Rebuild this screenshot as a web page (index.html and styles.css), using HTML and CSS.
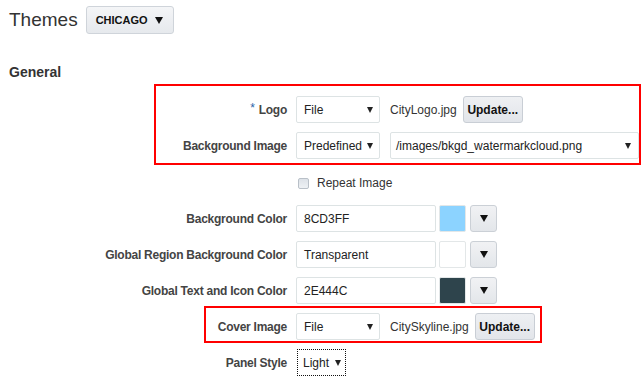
FILE: index.html
```html
<!DOCTYPE html>
<html lang="en">
<head>
    <meta charset="UTF-8">
    <title>Themes</title>
    <link rel="stylesheet" href="styles.css">
</head>
<body>
<div class="page">

    <div class="title-bar">
        <h1>Themes</h1>
        <button class="theme-btn">CHICAGO <span class="caret big"></span></button>
    </div>

    <h2 class="section">General</h2>

    <div class="form">
        <!-- Logo -->
        <div class="label"><span class="req">*</span>Logo</div>
        <div class="field">
            <div class="select w-84"><span>File</span><span class="caret"></span></div>
            <span class="file-name">CityLogo.jpg</span>
            <button class="btn">Update...</button>
        </div>

        <!-- Background image -->
        <div class="label">Background Image</div>
        <div class="field">
            <div class="select w-84"><span>Predefined</span><span class="caret"></span></div>
            <div class="select w-wide"><span>/images/bkgd_watermarkcloud.png</span><span class="caret"></span></div>
        </div>

        <div class="label"></div>
        <div class="field check-row">
            <span class="checkbox"></span>
            <span class="check-text">Repeat Image</span>
        </div>

        <!-- Renkler -->
        <div class="label">Background Color</div>
        <div class="field">
            <div class="input">8CD3FF</div>
            <span class="swatch" style="background-color: #8CD3FF;"></span>
            <button class="btn-drop"><span class="caret big"></span></button>
        </div>

        <div class="label">Global Region Background Color</div>
        <div class="field">
            <div class="input">Transparent</div>
            <span class="swatch" style="background-color: #ffffff;"></span>
            <button class="btn-drop"><span class="caret big"></span></button>
        </div>

        <div class="label">Global Text and Icon Color</div>
        <div class="field">
            <div class="input">2E444C</div>
            <span class="swatch" style="background-color: #2E444C;"></span>
            <button class="btn-drop"><span class="caret big"></span></button>
        </div>

        <!-- Cover image -->
        <div class="label">Cover Image</div>
        <div class="field">
            <div class="select w-84"><span>File</span><span class="caret"></span></div>
            <span class="file-name">CitySkyline.jpg</span>
            <button class="btn">Update...</button>
        </div>

        <div class="label">Panel Style</div>
        <div class="field">
            <div class="select panel"><span>Light</span><span class="caret"></span></div>
        </div>
    </div>

    <!-- kırmızı işaret kutuları -->
    <div class="mark mark-top"></div>
    <div class="mark mark-cover"></div>
</div>
</body>
</html>
```

FILE: styles.css
```css
body {
    margin: 0;
    background-color: #ffffff;
    font-family: "Liberation Sans", Arial, sans-serif;
    color: #333;
}
.page {
    position: relative;
    width: 644px;
    height: 388px;
    overflow: hidden;
}
.title-bar {
    display: flex;
    align-items: center;
    margin: 6px 0 0 9px;
    height: 28px;
}
h1 {
    margin: 0 8px 0 0;
    font-size: 19px;
    font-weight: normal;
    color: #333;
}
.theme-btn {
    height: 28px;
    padding: 0 10px 0 9px;
    font-family: inherit;
    font-size: 11px;
    font-weight: bold;
    color: #111;
    background: linear-gradient(#f4f5f7, #e6e9ed);
    border: 1px solid #cfd4da;
    border-radius: 3px;
    display: flex;
    align-items: center;
    gap: 7px;
}
.section {
    margin: 30px 0 16px 9px;
    font-size: 14px;
    line-height: 16px;
    font-weight: bold;
    color: #333;
}
.form {
    display: grid;
    grid-template-columns: 287px 1fr;
    column-gap: 9px;
    row-gap: 9px;
}
.label {
    display: flex;
    align-items: center;
    justify-content: flex-end;
    height: 27px;
    font-size: 12px;
    letter-spacing: -0.25px;
    font-weight: bold;
    color: #444;
}
.req {
    color: #2a64a8;
    font-weight: normal;
    font-size: 12px;
    align-self: flex-start;
    margin-top: 5px;
    margin-right: 4px;
}
.field {
    display: flex;
    align-items: center;
    height: 27px;
    font-size: 12px;
}
.check-row {
    height: 26px;
    padding-top: 2px;
}
.select {
    box-sizing: border-box;
    height: 27px;
    display: flex;
    align-items: center;
    justify-content: space-between;
    padding: 0 6px 0 7px;
    border: 1px solid #dde3e4;
    border-radius: 2px;
    background-color: #fff;
    font-size: 12px;
    color: #222;
}
.w-84 {
    width: 84px;
}
.w-wide {
    width: 249px;
    margin-left: 10px;
    padding-left: 5px;
    padding-right: 7px;
}
.panel {
    width: 49px;
    margin-left: 1px;
    padding: 0 4px 0 5px;
    border: 1px dotted #111;
    border-radius: 0;
}
.caret {
    width: 0;
    height: 0;
    border-left: 3px solid transparent;
    border-right: 3px solid transparent;
    border-top: 6px solid #222;
}
.caret.big {
    border-left: 4.5px solid transparent;
    border-right: 4.5px solid transparent;
    border-top: 7px solid #111;
}
.file-name {
    margin-left: 10px;
    margin-right: 6px;
    color: #333;
}
.btn {
    box-sizing: border-box;
    height: 27px;
    width: 60px;
    padding: 0;
    font-family: inherit;
    font-size: 12px;
    font-weight: bold;
    color: #111;
    background: linear-gradient(#eef0f3, #e2e5ea);
    border: 1px solid #c9ced5;
    border-radius: 3px;
}
.checkbox {
    box-sizing: border-box;
    width: 11px;
    height: 11px;
    margin-left: 2px;
    border: 1px solid #b9c0c8;
    border-radius: 2px;
    background: linear-gradient(#dde2e8, #eef1f4);
}
.check-text {
    margin-left: 8px;
    color: #333;
}
.input {
    box-sizing: border-box;
    width: 140px;
    height: 27px;
    padding-left: 7px;
    display: flex;
    align-items: center;
    border: 1px solid #dde3e4;
    border-radius: 2px;
    color: #222;
}
.swatch {
    box-sizing: border-box;
    width: 27px;
    height: 27px;
    margin-left: 3px;
    border: 1px solid #e3e7e8;
    border-radius: 2px;
}
.btn-drop {
    box-sizing: border-box;
    width: 27px;
    height: 27px;
    margin-left: 4px;
    padding: 0;
    display: flex;
    align-items: center;
    justify-content: center;
    background: linear-gradient(#f1f2f4, #e3e6ea);
    border: 1px solid #cbd0d6;
    border-radius: 3px;
}
.mark {
    position: absolute;
    box-sizing: border-box;
    border: 2px solid #ff0000;
}
.mark-top {
    left: 154px;
    top: 84px;
    width: 487px;
    height: 81px;
}
.mark-cover {
    left: 204px;
    top: 306px;
    width: 338px;
    height: 37px;
}
```
